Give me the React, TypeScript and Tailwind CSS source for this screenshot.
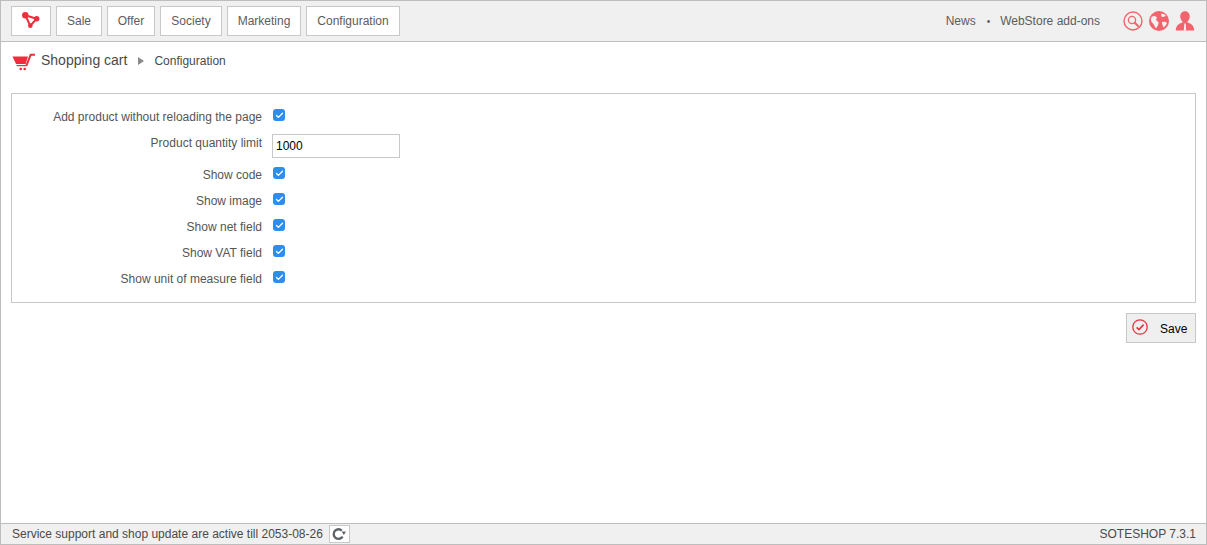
import { Check } from "lucide-react";

const navItems = [
  { label: "Sale", width: "w-[46px]" },
  { label: "Offer", width: "w-[48px]" },
  { label: "Society", width: "w-[62px]" },
  { label: "Marketing", width: "w-[74px]" },
  { label: "Configuration", width: "w-[94px]" },
];

const bottomRows = [
  "Show code",
  "Show image",
  "Show net field",
  "Show VAT field",
  "Show unit of measure field",
];

function Tick() {
  return (
    <span className="flex h-3 w-3 items-center justify-center rounded-[3px] bg-[#2f8cf0]">
      <Check size={9} strokeWidth={3.5} className="text-white" />
    </span>
  );
}

function CheckRow({ label }: { label: string }) {
  return (
    <div className="flex h-[26px] items-center">
      <label className="w-[250px] pt-[2px] text-right text-[12px] text-[#555]">{label}</label>
      <span className="mb-[2px] ml-[11px]">
        <Tick />
      </span>
    </div>
  );
}

function LogoMark() {
  return (
    <svg width="20" height="18" viewBox="0 0 20 18">
      <path d="M4.3 3.3 L15.7 6.7 L9.3 13.7 Z" fill="none" stroke="#ee2e3c" strokeWidth="2" />
      <circle cx="4.3" cy="3.3" r="3.2" fill="#ee2e3c" />
      <circle cx="15.7" cy="6.7" r="2.7" fill="#ee2e3c" />
      <circle cx="9.3" cy="13.7" r="2.3" fill="#ee2e3c" />
    </svg>
  );
}

function CartIcon() {
  return (
    <svg width="24" height="18" viewBox="0 0 24 18" className="ml-[1px] mt-[3px]">
      <path d="M0.5 3.6 H16 L13.6 11 H4 Z" fill="#ee2e3c" />
      <path d="M14.3 12.8 L18.7 1.7 H23" fill="none" stroke="#ee2e3c" strokeWidth="2" />
      <path d="M4.5 12.6 H14.5" stroke="#ee2e3c" strokeWidth="1.2" />
      <circle cx="8.7" cy="16" r="1.3" fill="#ee2e3c" />
      <circle cx="12.7" cy="16" r="1.3" fill="#ee2e3c" />
    </svg>
  );
}

function SearchIcon() {
  return (
    <svg width="20" height="20" viewBox="0 0 20 20" fill="none" stroke="#f2646d">
      <circle cx="10" cy="10" r="9" strokeWidth="1.4" />
      <circle cx="9" cy="9" r="3.6" strokeWidth="1.3" />
      <path d="M11.8 11.8 L15 15" strokeWidth="2" strokeLinecap="round" />
    </svg>
  );
}

function GlobeIcon() {
  return (
    <svg width="20" height="20" viewBox="0 0 20 20">
      <circle cx="10" cy="10" r="10" fill="#f2646d" />
      <path d="M2.5 6 C4 4.5 6 4.5 7.5 6 C8.5 7 7 8 7 9 C8 10 10 10.5 9.5 12.5 C9 14.5 8 16 7 17.5 C5.5 15.5 5 13 3.5 12 C2 11 1.5 8 2.5 6 Z" fill="#f4f0f0" />
      <path d="M12 3 C14 2.5 16 3.5 17 5 C15.5 5.5 14 6.5 12.5 5.5 Z" fill="#f4f0f0" />
      <path d="M13 11 C15 10.5 17 11 18 12 C17 14 16 15.5 14.5 16.5 C14 14.5 12.5 13 13 11 Z" fill="#f4f0f0" />
    </svg>
  );
}

function UserIcon() {
  return (
    <svg width="20" height="20" viewBox="0 0 20 20">
      <path d="M10 0.2 C13.2 0.2 15 2.8 14.7 6 C14.5 8 13.6 9.6 12.5 10.6 L12.5 11.6 C17 13 19.2 15.5 19.2 19.6 H0.8 C0.8 15.5 3 13 7.5 11.6 L7.5 10.6 C6.4 9.6 5.5 8 5.3 6 C5 2.8 6.8 0.2 10 0.2 Z" fill="#f2646d" />
      <path d="M9.3 12.5 H10.7 L11.2 19.6 H8.8 Z" fill="#f4f0f0" />
    </svg>
  );
}

function SaveIcon() {
  return (
    <svg width="16" height="16" viewBox="0 0 16 16" fill="none" stroke="#e8323f" className="mb-[2px]">
      <circle cx="8" cy="8" r="7.2" strokeWidth="1.3" />
      <path d="M4.6 8.3 L7 10.6 L11.6 5.6" strokeWidth="1.6" />
    </svg>
  );
}

function RefreshIcon() {
  return (
    <svg width="14" height="14" viewBox="0 0 14 14" fill="none">
      <path d="M10.6 9.6 A4.8 4.8 0 1 1 9.8 3.6" stroke="#5f6468" strokeWidth="2.4" />
      <path d="M9.6 4.4 H14 L11.8 8 Z" fill="#5f6468" />
    </svg>
  );
}

export default function App() {
  return (
    <div className="flex h-[545px] w-[1207px] flex-col border border-[#bdbdbd] bg-white font-['Liberation_Sans',Arial,sans-serif]">
      <header className="flex h-[41px] shrink-0 items-center justify-between border-b border-[#bdbdbd] bg-[#f0f0f0] pl-[10px] pr-[11px]">
        <nav className="flex gap-[5px]">
          <button className="flex h-[30px] w-[40px] items-center justify-center border border-[#c8c8c8] bg-white">
            <LogoMark />
          </button>
          {navItems.map((item) => (
            <button
              key={item.label}
              className={`flex h-[30px] items-center justify-center border border-[#c8c8c8] bg-white text-[12px] text-[#5c5c5c] ${item.width}`}
            >
              {item.label}
            </button>
          ))}
        </nav>
        <div className="flex items-center text-[12px] text-[#5c5c5c]">
          <span>News</span>
          <span className="ml-[11px] mr-[10px] text-[10px]">•</span>
          <span>WebStore add-ons</span>
          <div className="ml-[23px] flex items-center gap-[6px]">
            <SearchIcon />
            <GlobeIcon />
            <UserIcon />
          </div>
        </div>
      </header>

      <main className="flex-1 px-[10px]">
        <div className="flex h-[51px] items-start pt-[8px]">
          <CartIcon />
          <span className="ml-[5px] text-[14px] text-[#4a4a4a]">Shopping cart</span>
          <span className="ml-[11px] mt-[7px] h-0 w-0 border-y-[4px] border-l-[6px] border-y-transparent border-l-[#8a8a8a]" />
          <span className="ml-[10px] mt-[2px] text-[12px] text-[#4a4a4a]">Configuration</span>
        </div>

        <section className="h-[210px] border border-[#c8c8c8] pt-[9px]">
          <CheckRow label="Add product without reloading the page" />
          <div className="flex h-[32px] items-start">
            <label className="w-[250px] pt-[5px] text-right text-[12px] text-[#555]">Product quantity limit</label>
            <input
              readOnly
              value="1000"
              className="ml-[10px] mt-[5px] h-[24px] w-[128px] border border-[#c8c8c8] bg-white px-[3px] text-[12px] text-black outline-none"
            />
          </div>
          {bottomRows.map((r) => (
            <CheckRow key={r} label={r} />
          ))}
        </section>

        <div className="mt-[10px] flex justify-end">
          <button className="flex h-[30px] w-[70px] items-center border border-[#c8c8c8] bg-[#efefef] pl-[5px] text-[12px] text-black">
            <SaveIcon />
            <span className="ml-[12px] pt-[1px]">Save</span>
          </button>
        </div>
      </main>

      <footer className="flex h-[21px] shrink-0 items-center justify-between border-t border-[#bdbdbd] bg-[#f0f0f0] pl-[11px] pr-[10px] text-[12px] text-[#4a4a4a]">
        <div className="flex items-center">
          <span>Service support and shop update are active till 2053-08-26</span>
          <button className="ml-[6px] flex h-[18px] w-[21px] items-center justify-center border border-[#c8c8c8] bg-white">
            <RefreshIcon />
          </button>
        </div>
        <span>SOTESHOP 7.3.1</span>
      </footer>
    </div>
  );
}
